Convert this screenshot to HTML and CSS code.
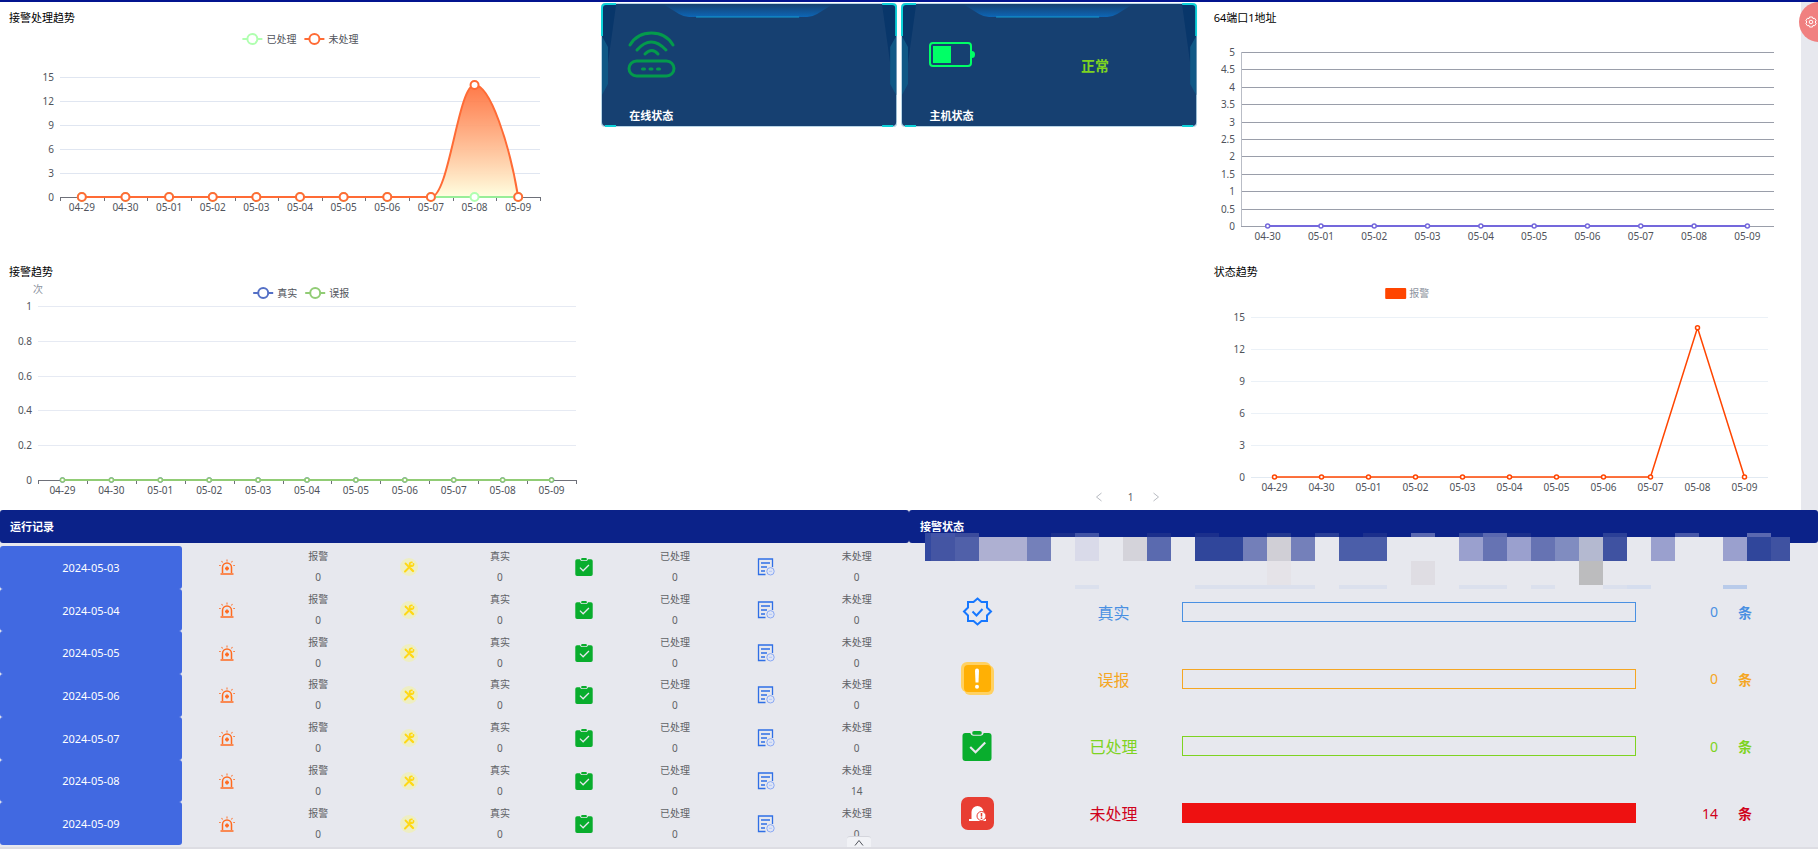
FILE: index.html
```html
<!DOCTYPE html>
<html lang="zh-CN">
<head>
<meta charset="utf-8">
<title>接警状态</title>
<link rel="stylesheet" href="styles.css">
</head>
<body>
<svg class="sprite" aria-hidden="true">
  <symbol id="siren" viewBox="0 0 16 16">
    <g fill="none" stroke="#ff6a1f"><path d="M3.500 14V8.500a4.500 4.500 0 0 1 9 0V14" stroke-width="1.500"/><path d="M1.500 15h13" stroke-width="1.500"/><path d="M8 .5v2M2.500 2l1.200 1.500M13.500 2l-1.200 1.500M0 6.500h1.800M14.200 6.500H16" stroke-width="1.200" opacity=".8"/><path d="M8 7.500v4M6 9.500h4" stroke-width="1.800"/></g>
  </symbol>
  <symbol id="tools" viewBox="0 0 18 18">
    <circle cx="9" cy="9" r="9" fill="#eeeec2"/>
    <g fill="none" stroke="#ffd814" stroke-linecap="round"><path d="M5 13.500l6-6" stroke-width="2"/><path d="M13.500 5.800a2 2 0 1 1-1.600-1.500" stroke-width="1.700"/><path d="M5.500 5.500l3 3" stroke-width="1.800"/><path d="M10.500 10.500l2.500 2.500" stroke-width="2.400"/></g>
  </symbol>
  <symbol id="done" viewBox="0 0 30 31">
    <path d="M3 2h5q1 3 3 3h8q2 0 3-3h5q3 0 3 3v23q0 3-3 3H3q-3 0-3-3V5q0-3 3-3z" fill="#09ad2d"/><rect x="10" y="0" width="10" height="4" rx="2" fill="#09ad2d"/><path d="M8 16.500l5.500 5.500L23.500 12" fill="none" stroke="#e7e8ee" stroke-width="2.200"/>
  </symbol>
  <symbol id="pending" viewBox="0 0 18 18">
    <g fill="none" stroke="#2f6fe6" stroke-width="1.300"><path d="M15.500 9V1h-14v15.500h7"/><path d="M4 5h9M4 9h6M4 13h4" stroke-width="1.500"/></g><circle cx="13.500" cy="13.300" r="3.700" fill="#dfe5f5" stroke="#8aa9f4"/><path d="M12 13.300h3" stroke="#b4c7f6"/>
  </symbol>
  <symbol id="seal" viewBox="0 0 33 33">
    <g fill="none" stroke="#1677ff" stroke-width="2"><path d="M16.500 3.500l4 3.500h5.500v5.500l4 4-4 4V26h-5.500l-4 3.500-4-3.500H7v-5.500l-4-4 4-4V7h5.500z"/><path d="M11.500 16.500l4 4 6-6.500"/></g>
  </symbol>
  <symbol id="warn" viewBox="0 0 33 33">
    <rect width="30" height="30" rx="6" fill="#ffd162"/><rect x="3" y="3" width="30" height="30" rx="6" fill="#ffd162"/><rect x="3" y="3" width="27" height="27" rx="4" fill="#ffb005"/><path d="M14 8.500a2 2 0 0 1 4 0l-.5 12h-3z" fill="#fff"/><circle cx="16" cy="24.800" r="2" fill="#fff"/>
  </symbol>
  <symbol id="alarm" viewBox="0 0 33 33">
    <rect width="33" height="33" rx="7" fill="#e83e33"/><path d="M8 24v-2h2.500v-7a6 6 0 0 1 12 0V22H25v2z" fill="#fff"/><circle cx="20.500" cy="19" r="4.500" fill="#fff" stroke="#e83e33"/><path d="M20.500 16v3.500M20.500 20.500V22" stroke="#e83e33" stroke-width="1.500"/>
  </symbol>
  <symbol id="frame" viewBox="0 0 296 124" preserveAspectRatio="none">
    <linearGradient id="crest" x1="0" y1="0" x2="0" y2="1"><stop offset="0" stop-color="#164070"/><stop offset="1" stop-color="#0d66b6"/></linearGradient>
    <rect width="296" height="124" rx="4" fill="#b9d5e6"/>
    <rect x="1" y="1" width="294" height="122" rx="4" fill="#164071"/>
    <path d="M1 2h14L7 60l-6 32zM295 2h-14l8 58 6 32z" fill="#08366a"/>
    <path d="M1 33l6 11v37l-6 11zM295 33l-6 11v37l6 11z" fill="#105886"/>
    <path d="M62 1h170l-16 10q-5 3-10 3H88q-5 0-10-3z" fill="url(#crest)"/>
    <path d="M95 14h103" stroke="#149bd0"/>
    <path d="M15 1H5Q1 1 1 5v28M281 1h10q4 0 4 4v28M4 123h11M281 123h11" fill="none" stroke="#0fd3da" stroke-width="2"/>
  </symbol>
</svg>

<div class="page">
  <main class="overview">
    <section class="charts">
      <article class="chart"><h2>接警处理趋势</h2><svg data-chart="handled"></svg></article>
      <article class="chart"><h2>接警趋势</h2><svg data-chart="received"></svg></article>
    </section>
    <section class="devices">
      <div class="cards">
        <article class="card">
          <svg class="card-frame"><use href="#frame"/></svg>
          <div class="card-body">
            <svg class="card-icon" viewBox="0 0 49 47" fill="none" stroke="#049a4c" stroke-width="3" stroke-linecap="round"><path d="M3 14Q10 2 24.500 2T46 14M10 19q14-16 29 0M18 23q7-7 13 0"/><rect x="2" y="30" width="45" height="15" rx="7.500"/><path d="M15.500 38h2M23 38h2M30.500 38h2"/></svg>
            <span class="card-state"></span>
          </div>
          <h3>在线状态</h3>
        </article>
        <article class="card">
          <svg class="card-frame"><use href="#frame"/></svg>
          <div class="card-body">
            <svg class="card-icon" viewBox="0 0 49 47" fill="#00ff66"><rect x="3" y="12" width="41" height="23" rx="3" fill="none" stroke="#00ff66" stroke-width="2"/><rect x="6" y="15" width="18" height="17"/><path d="M45 20q3 0 3 3.500t-3 3.500z"/></svg>
            <span class="card-state">正常</span>
          </div>
          <h3>主机状态</h3>
        </article>
      </div>
      <nav class="pager">
        <button aria-label="上一页"><svg viewBox="0 0 8 10"><path d="M6.500 1l-5 4 5 4"/></svg></button>
        <button class="current">1</button>
        <button aria-label="下一页"><svg viewBox="0 0 8 10"><path d="M1.500 1l5 4-5 4"/></svg></button>
      </nav>
    </section>
    <section class="charts charts-right">
      <article class="chart"><h2>64端口1地址</h2><svg data-chart="port"></svg></article>
      <article class="chart"><h2>状态趋势</h2><svg data-chart="state"></svg></article>
    </section>
  </main>

  <div class="details">
    <section class="panel">
      <h2 class="bar-title">运行记录</h2>
      <table class="records">
        <colgroup><col class="w-date"><col class="w-even"><col class="w-even"><col class="w-even"><col class="w-even"><col class="w-icon"><col class="w-text"><col class="w-icon"><col class="w-text"></colgroup>
        <tbody>
          <tr><th scope="row">2024-05-03</th><td><svg class="i16"><use href="#siren"/></svg></td><td>报警<br>0</td><td><svg class="i18"><use href="#tools"/></svg></td><td>真实<br>0</td><td><svg class="i18"><use href="#done"/></svg></td><td>已处理<br>0</td><td><svg class="i18"><use href="#pending"/></svg></td><td>未处理<br>0</td></tr>
          <tr><th scope="row">2024-05-04</th><td><svg class="i16"><use href="#siren"/></svg></td><td>报警<br>0</td><td><svg class="i18"><use href="#tools"/></svg></td><td>真实<br>0</td><td><svg class="i18"><use href="#done"/></svg></td><td>已处理<br>0</td><td><svg class="i18"><use href="#pending"/></svg></td><td>未处理<br>0</td></tr>
          <tr><th scope="row">2024-05-05</th><td><svg class="i16"><use href="#siren"/></svg></td><td>报警<br>0</td><td><svg class="i18"><use href="#tools"/></svg></td><td>真实<br>0</td><td><svg class="i18"><use href="#done"/></svg></td><td>已处理<br>0</td><td><svg class="i18"><use href="#pending"/></svg></td><td>未处理<br>0</td></tr>
          <tr><th scope="row">2024-05-06</th><td><svg class="i16"><use href="#siren"/></svg></td><td>报警<br>0</td><td><svg class="i18"><use href="#tools"/></svg></td><td>真实<br>0</td><td><svg class="i18"><use href="#done"/></svg></td><td>已处理<br>0</td><td><svg class="i18"><use href="#pending"/></svg></td><td>未处理<br>0</td></tr>
          <tr><th scope="row">2024-05-07</th><td><svg class="i16"><use href="#siren"/></svg></td><td>报警<br>0</td><td><svg class="i18"><use href="#tools"/></svg></td><td>真实<br>0</td><td><svg class="i18"><use href="#done"/></svg></td><td>已处理<br>0</td><td><svg class="i18"><use href="#pending"/></svg></td><td>未处理<br>0</td></tr>
          <tr><th scope="row">2024-05-08</th><td><svg class="i16"><use href="#siren"/></svg></td><td>报警<br>0</td><td><svg class="i18"><use href="#tools"/></svg></td><td>真实<br>0</td><td><svg class="i18"><use href="#done"/></svg></td><td>已处理<br>0</td><td><svg class="i18"><use href="#pending"/></svg></td><td>未处理<br>14</td></tr>
          <tr><th scope="row">2024-05-09</th><td><svg class="i16"><use href="#siren"/></svg></td><td>报警<br>0</td><td><svg class="i18"><use href="#tools"/></svg></td><td>真实<br>0</td><td><svg class="i18"><use href="#done"/></svg></td><td>已处理<br>0</td><td><svg class="i18"><use href="#pending"/></svg></td><td>未处理<br>0</td></tr>
        </tbody>
      </table>
    </section>

    <section class="panel">
      <h2 class="bar-title status-title">接警状态</h2>
      <svg class="mosaic" viewBox="16 0 865 56" preserveAspectRatio="none" shape-rendering="crispEdges" aria-hidden="true"></svg>
      <div class="statuses">
        <div class="status real"><svg class="i33"><use href="#seal"/></svg><span class="status-name">真实</span><span class="meter"></span><span class="count">0</span><b>条</b></div>
        <div class="status false"><svg class="i33"><use href="#warn"/></svg><span class="status-name">误报</span><span class="meter"></span><span class="count">0</span><b>条</b></div>
        <div class="status handled"><svg class="i30"><use href="#done"/></svg><span class="status-name">已处理</span><span class="meter"></span><span class="count">0</span><b>条</b></div>
        <div class="status open"><svg class="i33"><use href="#alarm"/></svg><span class="status-name">未处理</span><span class="meter full"></span><span class="count">14</span><b>条</b></div>
      </div>
    </section>
  </div>

  <button class="settings" aria-label="设置"><svg viewBox="0 0 12 12"><path d="M4.500 1h3l.5 1.600 1.700-.3 1.500 2.500L10 6l1.200 1.200-1.500 2.500L8 9.400 7.500 11h-3L4 9.400l-1.700.3L.8 7.200 2 6 .8 4.800l1.500-2.500L4 2.600z"/><circle cx="6" cy="6" r="1.800"/></svg></button>
  <button class="expand" aria-label="展开"><svg viewBox="0 0 10 8"><path d="M1 6.500l4-5 4 5"/></svg></button>
</div>
<script src="charts.js"></script>
</body>
</html>
```
FILE: styles.css
```css
* { box-sizing: border-box; }
body {
  margin: 0;
  background: #e7e8ee;
  color: #000;
  font-family: "Noto Sans", "Noto Sans CJK SC", sans-serif;
  font-size: 10px;
}
h2, h3 { margin: 0; font-size: 11px; line-height: 20px; }
button { padding: 0; border: 0; background: none; font: inherit; }
svg { display: block; }
.sprite { position: absolute; width: 0; height: 0; }

.page {
  position: relative;
  display: flex;
  flex-direction: column;
  min-height: 100vh;
  overflow: hidden;
  border-top: 2px solid #03148f;
  border-bottom: 2px solid #dddde3;
}

.overview {
  display: grid;
  grid-template-columns: repeat(3, 1fr);
  margin-right: 17px;
  background: #fff;
}
.chart { padding-top: 6px; }
.chart h2 { padding-left: 9px; font-weight: 400; }
.charts-right h2 { padding-left: 13px; }
.chart svg { width: 100%; height: 228px; }
.chart text { fill: #50535b; font-size: 10px; dominant-baseline: central; }
.chart .muted { fill: #8c93a0; }

.devices { display: flex; flex-direction: column; justify-content: space-between; }
.cards { display: grid; grid-template-columns: 1fr 1fr; gap: 4px; padding: 1px 3px 0 1px; }
.card { position: relative; height: 124px; }
.card-frame { position: absolute; width: 100%; height: 100%; }
.card-body { position: relative; display: flex; height: 103px; padding-left: 26px; }
.card-icon { width: 49px; height: 47px; margin-top: 28px; }
.card-state {
  flex: 1;
  margin-left: 16px;
  line-height: 126px;
  text-align: center;
  color: #7ed321;
  font-size: 14px;
  font-weight: 700;
}
.card h3 { position: relative; padding-left: 28px; color: #fff; }
.pager {
  display: flex;
  justify-content: flex-end;
  gap: 17px;
  padding: 0 41px 6px 0;
  color: #606266;
}
.pager button { width: 8px; height: 14px; line-height: 14px; }
.pager .current { margin-left: 7px; color: #606266; }
.pager svg { width: 8px; height: 10px; margin: 2px 0; fill: none; stroke: #b8bbc2; }

.details { display: grid; grid-template-columns: 1fr 1fr; flex: 1; }
.panel { position: relative; display: flex; flex-direction: column; }
.bar-title {
  height: 33px;
  padding-left: 10px;
  border-radius: 3px;
  background: #0b2289;
  color: #fff;
  line-height: 33px;
}
.status-title { padding-left: 11px; }

.records {
  flex: 1;
  width: 100%;
  margin: 3px 0 2px;
  border-collapse: collapse;
  table-layout: fixed;
  color: #606266;
  text-align: center;
}
.records th {
  border-radius: 3px;
  background: #4169e1;
  color: #fff;
  font-size: 11px;
  font-weight: 400;
}
.records td, .records th { padding: 0; }
.records td { line-height: 21px; }
.records svg { margin: auto; }
.w-date { width: 20%; }
.w-even { width: 10%; }
.w-icon { width: 8.5%; }
.w-text { width: 11.5%; }
.i16 { width: 16px; height: 16px; }
.i18 { width: 18px; height: 18px; }
.i30 { width: 30px; height: 30px; }
.i33 { width: 33px; height: 33px; }

.mosaic { position: absolute; top: 23px; left: 16px; width: calc(100% - 44px); height: 56px; }
.statuses { display: grid; flex: 1; grid-auto-rows: 1fr; padding-top: 35px; }
.status {
  display: grid;
  grid-template-columns: 15% 15% 50% 9% 1fr;
  align-items: center;
  color: var(--tone);
  font-size: 14px;
}
.status > svg { justify-self: center; }
.status b { padding-left: 20px; }
.status-name { font-size: 16px; text-align: center; }
.count { text-align: right; }
.meter { height: 20px; border: 1px solid var(--tone); }
.meter.full { border: 0; background: #ee1111; }
.real { --tone: #4a90e2; }
.false { --tone: #f5a623; }
.handled { --tone: #7ed321; }
.open { --tone: #d0021b; }

.settings {
  position: absolute;
  top: 0;
  right: -21px;
  width: 40px;
  height: 40px;
  padding-left: 6px;
  border-radius: 50%;
  background: #f08080;
}
.settings svg { width: 12px; height: 12px; fill: none; stroke: #fff; }
.expand {
  position: absolute;
  bottom: -2px;
  left: 847px;
  width: 24px;
  height: 13px;
  border-top: 1px solid #d4d5dc;
  border-radius: 3px 3px 0 0;
  background: #f1f2f6;
}
.expand svg { width: 10px; height: 8px; margin: auto; fill: none; stroke: #50535b; }
```
FILE: charts.js
```js
const days = ['04-29', '04-30', '05-01', '05-02', '05-03', '05-04', '05-05', '05-06', '05-07', '05-08', '05-09'];
const none = days.map(() => 0);
const alarms = [0, 0, 0, 0, 0, 0, 0, 0, 0, 14, 0];

const charts = {
  handled: {
    days, left: 60, right: 60, top: 49, bottom: 169, max: 15, step: 3,
    grid: '#e0e6f1', axis: '#6e7079', ticks: true, radius: 4, legendAt: 0.404,
    series: [
      { name: '已处理', color: '#98ee98', legend: '#b0ffb0', values: none },
      { name: '未处理', color: '#ff6b35', values: alarms, smooth: true }
    ]
  },
  received: {
    days, left: 38, right: 24, top: 24, bottom: 198, max: 1, step: 0.2, unit: '次',
    grid: '#e6eaf3', axis: '#6e7079', ticks: true, radius: 2, legendAt: 0.422,
    series: [
      { name: '真实', color: '#5470c6', values: none },
      { name: '误报', color: '#91cc75', values: none }
    ]
  },
  port: {
    days: days.slice(1), left: 40, right: 27, top: 24, bottom: 198, max: 5, step: 0.5,
    grid: '#9a9eaa', axis: '#9a9eaa', side: true, radius: 2,
    series: [{ color: '#7468dc', values: none.slice(1) }]
  },
  state: {
    days, left: 50, right: 33, top: 35, bottom: 195, max: 15, step: 3,
    grid: '#ebf1f7', axis: '#e2eaf2', radius: 2, legendAt: 0.307, block: true,
    series: [{ name: '报警', color: '#ff4500', values: alarms }]
  }
};

function text(x, y, value, anchor, cls) {
  return `<text x="${x}" y="${y}" text-anchor="${anchor}" class="${cls || ''}">${value}</text>`;
}

function line(x1, y1, x2, y2, color, width) {
  return `<line x1="${x1}" y1="${y1}" x2="${x2}" y2="${y2}" stroke="${color}" stroke-width="${width || 1}"/>`;
}

function draw(svg) {
  const c = charts[svg.dataset.chart];
  const end = svg.clientWidth - c.right;
  const slot = (end - c.left) / c.days.length;
  const scaleY = v => c.bottom - (c.bottom - c.top) * v / c.max;
  let out = '<defs><linearGradient id="heat" x1="0" y1="0" x2="0" y2="1"><stop offset="0" stop-color="#ff6b35" stop-opacity=".9"/><stop offset="1" stop-color="#ffffe0"/></linearGradient></defs>';

  const count = Math.round(c.max / c.step);
  for (let i = 0; i <= count; i++) {
    const value = Math.round(i * c.step * 10) / 10;
    const y = Math.round(scaleY(value)) + 0.5;
    out += line(c.left, y, end, y, i ? c.grid : c.axis);
    out += text(c.left - 6, y - 1, value, 'end');
  }
  if (c.side) out += line(c.left + 0.5, c.top, c.left + 0.5, c.bottom, '#b9bdc6');
  if (c.unit) out += text(c.left, 7, c.unit, 'middle', 'muted');
  if (c.ticks) {
    for (let i = 0; i <= c.days.length; i++) {
      const x = Math.round(c.left + i * slot) + 0.5;
      out += line(x, c.bottom, x, c.bottom + 4, c.axis);
    }
  }
  c.days.forEach((d, i) => { out += text(c.left + (i + 0.5) * slot, c.bottom + 10, d, 'middle'); });

  let at = (c.legendAt || 0) * svg.clientWidth;
  let areas = '';
  let strokes = '';
  c.series.forEach(s => {
    const pts = s.values.map((v, i) => [c.left + (i + 0.5) * slot, scaleY(v)]);
    let path = `M${pts[0]}`;
    for (let i = 1; i < pts.length; i++) {
      const [x0, y0] = pts[i - 1];
      const [x1, y1] = pts[i];
      if (s.smooth && y1 < y0) path += `C${x0 + slot * 0.42},${y0} ${x1 - slot * 0.38},${y1} ${x1},${y1}`;
      else if (s.smooth && y1 > y0) path += `C${x0 + slot * 0.36},${y0} ${x1 - slot * 0.2},${y0 + (y1 - y0) * 0.53} ${x1},${y1}`;
      else path += `L${x1},${y1}`;
    }
    if (s.smooth) areas += `<path d="${path}Z" fill="url(#heat)"/>`;
    strokes += `<path d="${path}" fill="none" stroke="${s.color}" stroke-width="${c.block ? 1.5 : 2}"/>`;
    pts.forEach(([x, y]) => {
      strokes += `<circle cx="${x}" cy="${y}" r="${c.radius}" fill="#fff" stroke="${s.legend || s.color}" stroke-width="${c.radius > 2 ? 2 : 1.5}"/>`;
    });
    if (!s.name) return;
    const tone = s.legend || s.color;
    if (c.block) out += `<rect x="${at}" y="6" width="21" height="11" rx="1" fill="${tone}"/>`;
    else out += line(at, 11, at + 20, 11, tone, 2) + `<circle cx="${at + 10}" cy="11" r="5" fill="#fff" stroke="${tone}" stroke-width="2"/>`;
    out += text(at + 24, 11, s.name, 'start', c.block ? 'muted' : '');
    at += 32 + s.name.length * 10;
  });
  svg.innerHTML = out + areas + strokes;
}

/* Privacy mosaic: [x, y, width, height, colour] */
const tiles = [
  [16, 4, 865, 24, '#e7e8ee'],
  [16, 0, 6, 28, '#3349a0'], [22, 0, 24, 4, '#4455a8'], [46, 0, 24, 4, '#3c4c9c'],
  [142, 0, 24, 4, '#1b2f8c'], [166, 0, 24, 4, '#4153a4'], [238, 0, 24, 4, '#1b2f8c'],
  [286, 0, 24, 4, '#1b2f8c'], [358, 0, 24, 4, '#24398f'], [406, 0, 24, 4, '#2b4097'],
  [454, 0, 24, 4, '#1b2f8c'], [502, 0, 24, 4, '#5a68b0'], [550, 0, 24, 4, '#33489c'],
  [574, 0, 24, 4, '#5a68b0'], [598, 0, 24, 4, '#1b2f8c'], [694, 0, 24, 4, '#2b4097'],
  [766, 0, 24, 4, '#4858a8'], [838, 0, 24, 4, '#5a68b0'],
  [22, 4, 24, 24, '#4455a3'], [46, 4, 24, 24, '#5060a9'], [70, 4, 48, 24, '#aeb0d2'],
  [118, 4, 24, 24, '#7480ba'], [166, 4, 24, 24, '#d9dae9'], [214, 4, 24, 24, '#d4d3da'],
  [238, 4, 24, 24, '#5a6aaf'], [286, 4, 48, 24, '#30469b'], [334, 4, 24, 24, '#737fb9'],
  [358, 4, 24, 24, '#d0cfd6'], [382, 4, 24, 24, '#7480ba'], [430, 4, 48, 24, '#4b5ea9'],
  [550, 4, 24, 24, '#9aa0ce'], [574, 4, 24, 24, '#6673b3'], [598, 4, 24, 24, '#9aa0ce'],
  [622, 4, 24, 24, '#6673b3'], [646, 4, 24, 24, '#808cc0'], [670, 4, 24, 24, '#b4b9d0'],
  [694, 4, 24, 24, '#3f52a1'], [742, 4, 24, 24, '#9aa0ce'], [814, 4, 24, 24, '#9aa0ce'],
  [838, 4, 24, 24, '#30469b'], [862, 4, 19, 24, '#3f52a1'],
  [358, 28, 24, 24, '#e5e3e8'], [502, 28, 24, 24, '#dfdde3'], [670, 28, 24, 24, '#bcbcbe'],
  [166, 52, 24, 4, '#dbe0ed'], [286, 52, 120, 4, '#dbe0ed'], [430, 52, 48, 4, '#dbe0ed'],
  [550, 52, 48, 4, '#dbe0ed'], [622, 52, 24, 4, '#dbe0ed'], [694, 52, 24, 4, '#dbe0ed'],
  [718, 52, 24, 4, '#d5ddee'], [814, 52, 24, 4, '#b9cbea']
];
document.querySelector('.mosaic').innerHTML = tiles
  .map(([x, y, w, h, fill]) => `<rect x="${x}" y="${y}" width="${w}" height="${h}" fill="${fill}"/>`)
  .join('');

function drawAll() {
  document.querySelectorAll('[data-chart]').forEach(draw);
}
drawAll();
window.addEventListener('resize', drawAll);
```
